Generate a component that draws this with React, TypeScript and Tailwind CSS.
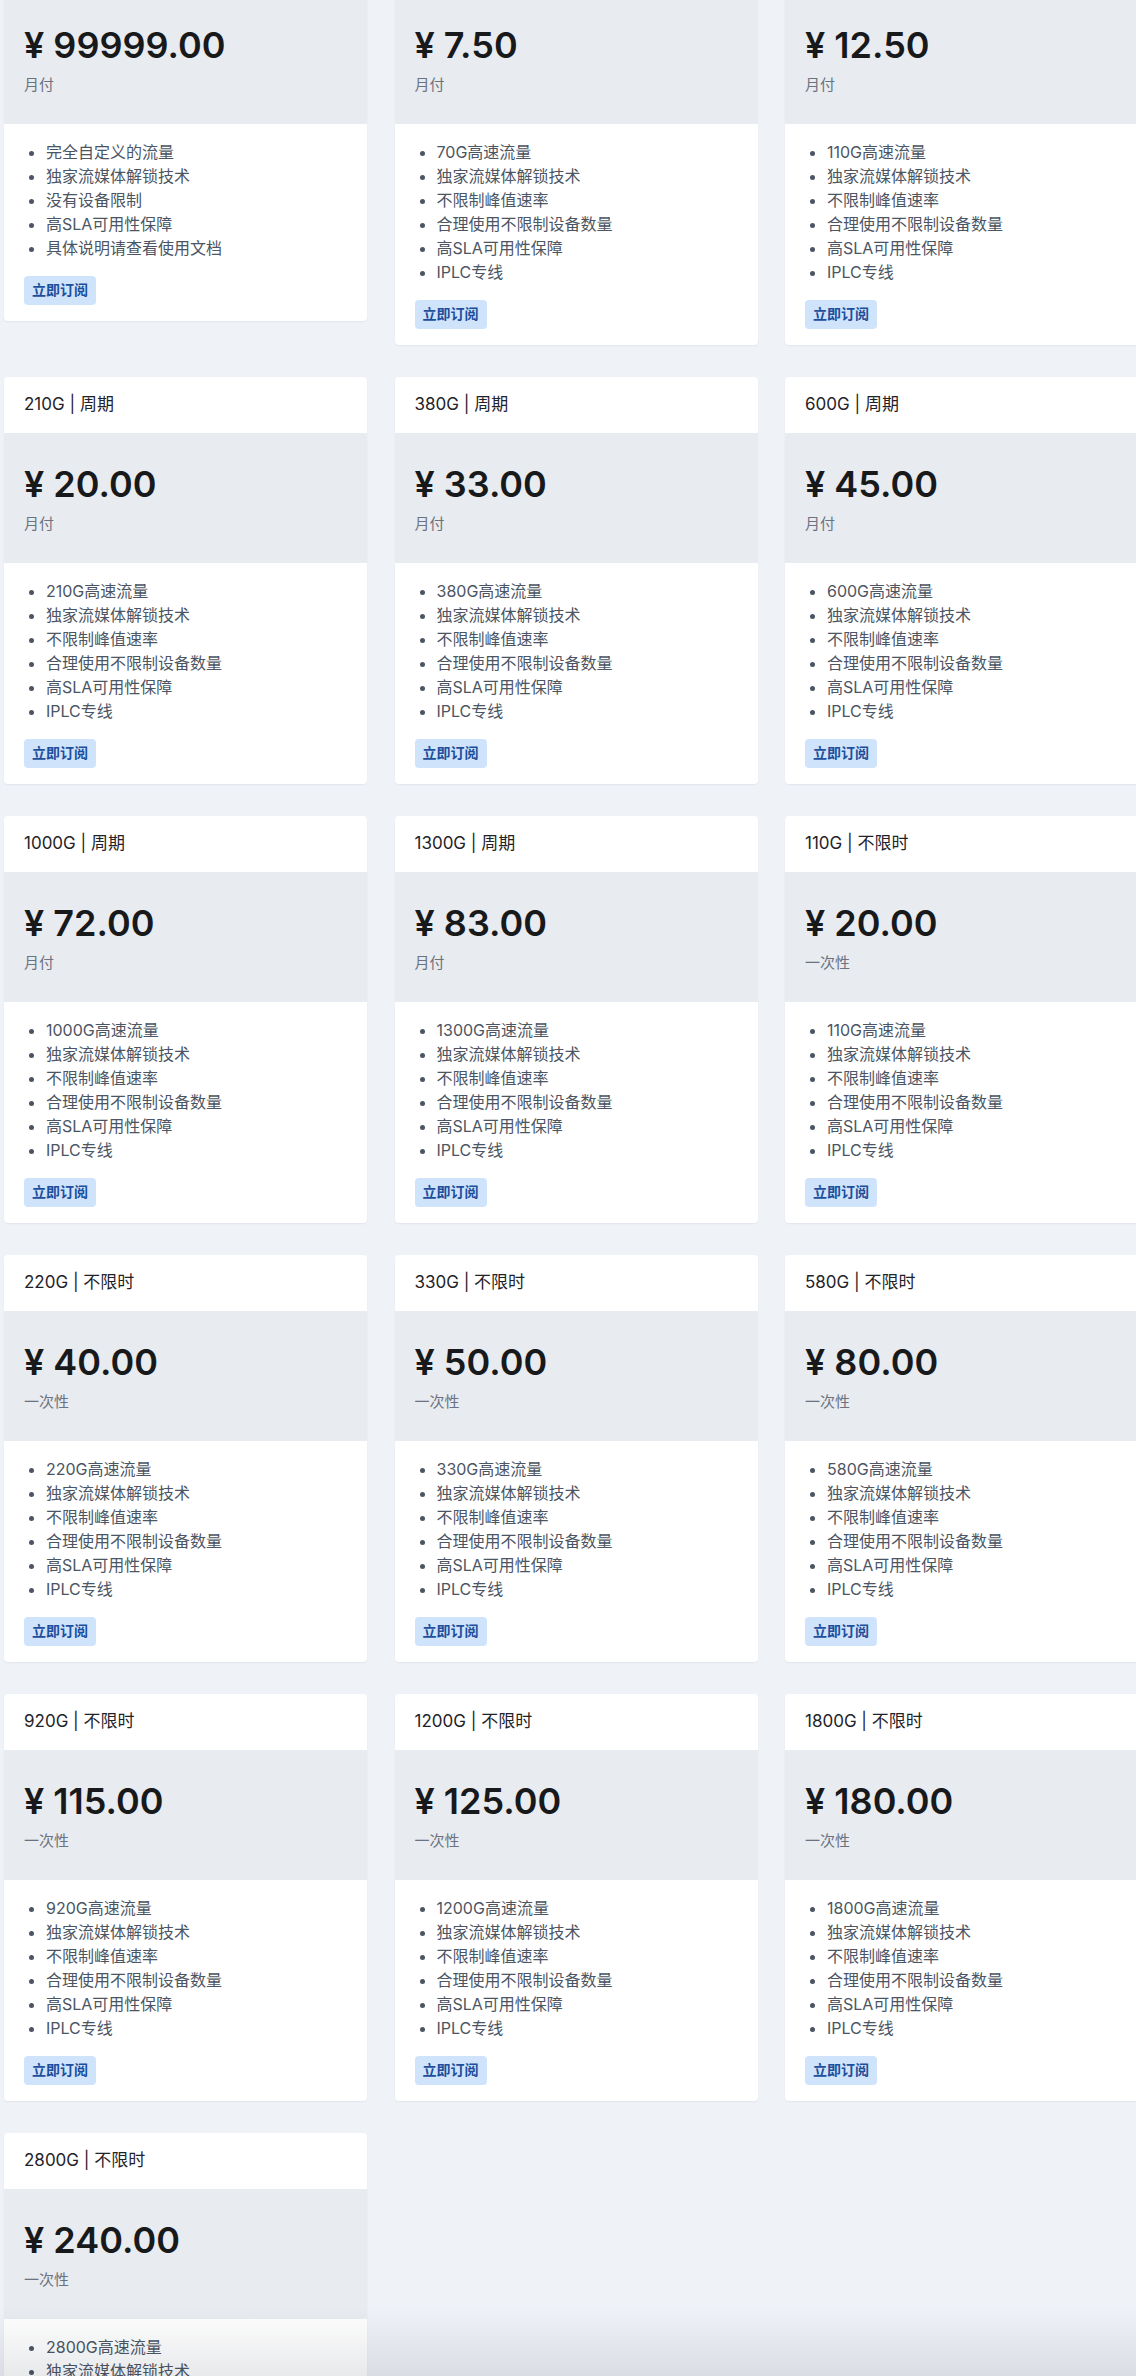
const common = ["独家流媒体解锁技术", "不限制峰值速率", "合理使用不限制设备数量", "高SLA可用性保障", "IPLC专线"];

type Plan = { title: string; price: string; period: string; features: string[] };

function cycle(gb: string, price: string): Plan {
  return { title: `${gb} | 周期`, price, period: "月付", features: [`${gb}高速流量`, ...common] };
}

function once(gb: string, price: string): Plan {
  return { title: `${gb} | 不限时`, price, period: "一次性", features: [`${gb}高速流量`, ...common] };
}

const plans: Plan[] = [
  {
    title: "自定义 | 周期",
    price: "99999.00",
    period: "月付",
    features: ["完全自定义的流量", "独家流媒体解锁技术", "没有设备限制", "高SLA可用性保障", "具体说明请查看使用文档"],
  },
  cycle("70G", "7.50"),
  cycle("110G", "12.50"),
  cycle("210G", "20.00"),
  cycle("380G", "33.00"),
  cycle("600G", "45.00"),
  cycle("1000G", "72.00"),
  cycle("1300G", "83.00"),
  once("110G", "20.00"),
  once("220G", "40.00"),
  once("330G", "50.00"),
  once("580G", "80.00"),
  once("920G", "115.00"),
  once("1200G", "125.00"),
  once("1800G", "180.00"),
  once("2800G", "240.00"),
];

function PlanCard({ plan }: { plan: Plan }) {
  return (
    <div className="bg-white rounded-[4px] shadow-[0_1px_2px_rgba(15,23,42,0.06)] overflow-hidden">
      <div className="h-14 px-5 flex items-center text-[17px] text-[#1f2329]">{plan.title}</div>
      <div className="bg-[#e8ebef] h-[130px] px-5 pt-[31px]">
        <div className="text-[36px] leading-10 font-semibold text-[#18191b]">¥ {plan.price}</div>
        <div className="mt-[10px] text-[15px] leading-5 text-[#6b7280]">{plan.period}</div>
      </div>
      <div className="px-5 pt-4 pb-4">
        <ul className="list-disc pl-[22px] text-base leading-6 text-[#4b5563] marker:text-[#4b5563]">
          {plan.features.map((f) => (
            <li key={f}>{f}</li>
          ))}
        </ul>
        <button className="mt-4 h-[29px] px-2 rounded-[4px] bg-[#cfe3fb] text-sm font-bold text-[#1d4f9c]">
          立即订阅
        </button>
      </div>
    </div>
  );
}

export default function App() {
  return (
    <div
      className="relative h-[2376px] w-[1136px] overflow-hidden bg-[#eff2f7]"
      style={{ fontFamily: 'Inter, "Noto Sans CJK SC", sans-serif' }}
    >
      <div className="-mt-[62.5px] pl-1 grid grid-cols-[repeat(3,363px)] gap-x-[27.5px] gap-y-8 items-start">
        {plans.map((p) => (
          <PlanCard key={p.title + p.price} plan={p} />
        ))}
      </div>
      <div className="pointer-events-none absolute inset-x-0 bottom-0 h-[70px] bg-gradient-to-b from-transparent to-[rgba(30,40,60,0.1)]" />
    </div>
  );
}
